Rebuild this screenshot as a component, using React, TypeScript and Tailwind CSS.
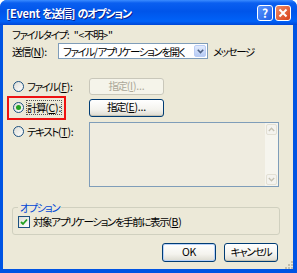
import React from "react";

const jp =
  "font-['Noto_Sans_CJK_JP',sans-serif] [font-feature-settings:'palt'] whitespace-nowrap";

// XP style push button
const XpButton = ({
  children,
  disabled,
  className = "",
}: {
  children: React.ReactNode;
  disabled?: boolean;
  className?: string;
}) => (
  <div
    className={
      "flex items-center justify-center rounded-[3px] border leading-none " +
      (disabled
        ? "border-[#c9c7ba] bg-[#f5f4ea] text-[#aca899] "
        : "border-[#003c74] bg-[linear-gradient(180deg,#ffffff_0%,#f4f3ee_60%,#dcdad0_100%)] text-black shadow-[inset_0_-1px_0_#c5c2b2] ") +
      className
    }
  >
    {children}
  </div>
);

const Radio = ({ checked }: { checked?: boolean }) => (
  <div className="flex h-[11px] w-[11px] shrink-0 items-center justify-center rounded-full border border-[#1c5180] bg-[linear-gradient(135deg,#dcdcd5,#ffffff)]">
    {checked && <div className="h-[5px] w-[5px] rounded-full bg-[#21a121]" />}
  </div>
);

const U = ({ children }: { children: React.ReactNode }) => (
  <span className="underline underline-offset-1">{children}</span>
);

// latin runs keep normal spacing
const L = ({ children }: { children: React.ReactNode }) => (
  <span className="tracking-[-0.2px]">{children}</span>
);

export default function App() {
  return (
    <div className={"relative h-[273px] w-[297px] overflow-hidden rounded-t-[7px] bg-[#0054e3] " + jp}>
      {/* title bar */}
      <div className="flex h-[25px] items-center bg-[linear-gradient(180deg,#3b8cff_0%,#0a5ff0_12%,#0055ea_45%,#0062f8_85%,#0047d6_100%)] pl-[6px] pr-[6px]">
        <div className="flex-1 pt-[1px] text-[11px] font-bold tracking-[-1.2px] text-white [text-shadow:1px_1px_0_#0a1e8a]">
          <L>[Event </L>を送信<L>] </L>のオプション
        </div>
        <div className="flex gap-[2px]">
          <div className="flex h-[16px] w-[16px] items-center justify-center rounded-[3px] border border-white bg-[linear-gradient(135deg,#5a95ff,#1f5fe6)] text-[12px] font-bold leading-none text-white">
            ?
          </div>
          <div className="flex h-[16px] w-[16px] items-center justify-center rounded-[3px] border border-white bg-[linear-gradient(135deg,#ef8a64,#d8431c)]">
            <svg width="10" height="10" viewBox="0 0 10 10">
              <path d="M1.5 1.5L8.5 8.5M8.5 1.5L1.5 8.5" stroke="white" strokeWidth="2" />
            </svg>
          </div>
        </div>
      </div>

      {/* body */}
      <div className="ml-[3px] mr-[4px] h-[244px] bg-[#ece9d8] pl-[9px] pr-[14px] text-[10.5px] leading-[13px] tracking-[-1.4px] text-black">
        <div className="pt-[3px]">
          ファイルタイプ<L>:&nbsp;&nbsp;&quot;&lt;</L>不明<L>&gt;&quot;</L>
        </div>

        <div className="mt-[2px] flex h-[16px] items-center">
          <div className="w-[46px]">
            送信<L>(<U>N</U>):</L>
          </div>
          <div className="flex h-[16px] w-[150px] items-center border border-[#7f9db9] bg-white pl-[4px]">
            <div className="flex-1 overflow-hidden">ファイル<L>/</L>アプリケーションを開く</div>
            <div className="mr-[1px] flex h-[12px] w-[12px] shrink-0 items-center justify-center rounded-[2px] border border-[#b9ccf5] bg-[linear-gradient(180deg,#e2ebfd,#b6cbf4)]">
              <svg width="7" height="5" viewBox="0 0 7 5">
                <path d="M0.8 0.8L3.5 3.5L6.2 0.8" stroke="#4d6185" strokeWidth="1.6" fill="none" />
              </svg>
            </div>
          </div>
          <div className="ml-[5px]">メッセージ</div>
        </div>

        <div className="mt-[19px] flex h-[17px] items-center">
          <div className="flex w-[77px] items-center gap-[3px] pl-[1px]">
            <Radio />
            <span>
              ファイル<L>(<U>F</U>):</L>
            </span>
          </div>
          <XpButton disabled className="h-[17px] w-[75px]">
            指定<L>(<U>I</U>)...</L>
          </XpButton>
        </div>

        <div className="mt-[4px] flex h-[17px] items-center">
          <div className="w-[77px]">
            <div className="-ml-[5px] inline-flex h-[24px] items-center gap-[3px] border-2 border-[#ee1111] pl-[4px] pr-[3px]">
              <Radio checked />
              <span className="outline-1 outline-dotted outline-[#555]">
                計算<L>(<U>C</U>):</L>
              </span>
            </div>
          </div>
          <XpButton className="h-[18px] w-[75px]">
            指定<L>(<U>E</U>)...</L>
          </XpButton>
        </div>

        <div className="mt-[6px] flex">
          <div className="flex w-[77px] items-start gap-[3px] pl-[1px] pt-[3px]">
            <div className="mt-[1px]">
              <Radio />
            </div>
            <span>
              テキスト<L>(<U>T</U>):</L>
            </span>
          </div>
          <div className="flex h-[65px] w-[191px] border border-[#7f9db9] bg-[#efece0]">
            <div className="flex-1" />
            <div className="flex w-[13px] flex-col justify-between bg-[#f6f5ee] p-[1px]">
              <div className="flex h-[11px] items-center justify-center rounded-[2px] border border-[#e3e0d4] bg-[#f4f3ee]">
                <svg width="7" height="5" viewBox="0 0 7 5">
                  <path d="M0.8 4L3.5 1.2L6.2 4" stroke="#c6c3b4" strokeWidth="1.3" fill="none" />
                </svg>
              </div>
              <div className="flex h-[11px] items-center justify-center rounded-[2px] border border-[#e3e0d4] bg-[#f4f3ee]">
                <svg width="7" height="5" viewBox="0 0 7 5">
                  <path d="M0.8 1L3.5 3.8L6.2 1" stroke="#c6c3b4" strokeWidth="1.3" fill="none" />
                </svg>
              </div>
            </div>
          </div>
        </div>

        {/* options group */}
        <div className="relative mt-[20px] h-[28px] w-[268px] rounded-[3px] border border-[#d0d0bf]">
          <div className="absolute -top-[7px] left-[5px] bg-[#ece9d8] px-[2px] text-[#0046d5]">
            オプション
          </div>
          <div className="flex items-center gap-[3px] pl-[5px] pt-[7px]">
            <div className="flex h-[12px] w-[12px] items-center justify-center border border-[#1c5180] bg-[linear-gradient(135deg,#dcdcd5,#ffffff)]">
              <svg width="8" height="8" viewBox="0 0 8 8">
                <path d="M1 4L3 6L7 1.5" stroke="#21a121" strokeWidth="1.8" fill="none" />
              </svg>
            </div>
            <span>
              対象アプリケーションを手前に表示<L>(<U>B</U>)</L>
            </span>
          </div>
        </div>

        <div className="mt-[8px] flex justify-end gap-[8px] pr-[1px]">
          <XpButton className="h-[19px] w-[54px] border-[#003c74] shadow-[inset_0_0_0_1px_#b7d1f9,inset_0_-1px_0_#c5c2b2]">
            <L>OK</L>
          </XpButton>
          <XpButton className="h-[19px] w-[54px]">キャンセル</XpButton>
        </div>
      </div>

      {/* resize grip */}
      <svg className="absolute bottom-[4px] right-[4px]" width="10" height="10" viewBox="0 0 10 10">
        <g fill="#c3bfae">
          <rect x="8" y="2" width="2" height="2" />
          <rect x="5" y="5" width="2" height="2" />
          <rect x="8" y="5" width="2" height="2" />
          <rect x="2" y="8" width="2" height="2" />
          <rect x="5" y="8" width="2" height="2" />
          <rect x="8" y="8" width="2" height="2" />
        </g>
      </svg>
    </div>
  );
}
